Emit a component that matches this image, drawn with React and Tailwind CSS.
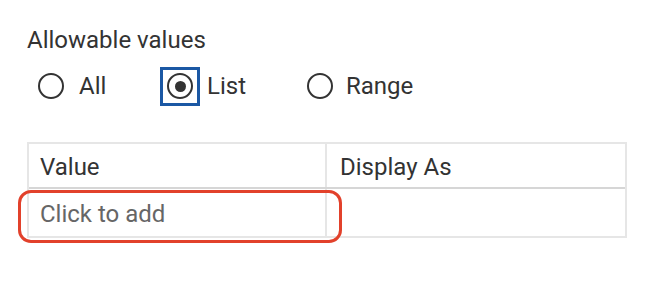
export default function App() {
  const font = { fontFamily: 'Roboto, "Liberation Sans", sans-serif' };
  return (
    <div className="w-[654px] h-[292px] bg-white text-[#333333] pl-[27px] pt-[26px]" style={font}>
      <div className="text-[24px] leading-[28px]">Allowable values</div>
      <div className="flex items-center h-[40px] mt-[12px] pl-[11px] text-[24px]">
        <div className="flex items-center w-[122px]">
          <span className="w-[26px] h-[26px] rounded-full border-2 border-[#333333] shrink-0" />
          <span className="ml-[15px]">All</span>
        </div>
        <div className="flex items-center w-[147px]">
          <span className="w-[40px] h-[39px] border-[3px] border-[#1b58a4] flex items-center justify-center shrink-0">
            <span className="w-[26px] h-[26px] rounded-full border-2 border-[#333333] flex items-center justify-center">
              <span className="w-[11px] h-[11px] rounded-full bg-[#333333]" />
            </span>
          </span>
          <span className="ml-[7px]">List</span>
        </div>
        <div className="flex items-center">
          <span className="w-[26px] h-[26px] rounded-full border-2 border-[#333333] shrink-0" />
          <span className="ml-[13px]">Range</span>
        </div>
      </div>
      <div className="relative mt-[36px] w-[600px] border-2 border-[#e6e6e6] text-[24px]">
        <div className="flex h-[45px] border-b-2 border-[#d6d6d6]">
          <div className="w-[298px] border-r-2 border-[#e6e6e6] pl-[11px] pt-[2px] flex items-center">Value</div>
          <div className="flex-1 pl-[13px] pt-[2px] flex items-center">Display As</div>
        </div>
        <div className="flex h-[47px]">
          <div className="w-[298px] border-r-2 border-[#e6e6e6] pl-[11px] pt-[3px] flex items-center text-[#666666]">Click to add</div>
          <div className="flex-1" />
        </div>
        <div className="absolute left-[-11px] top-[46px] w-[324px] h-[53px] border-[3px] border-[#e2412b] rounded-[13px]" />
      </div>
    </div>
  );
}
